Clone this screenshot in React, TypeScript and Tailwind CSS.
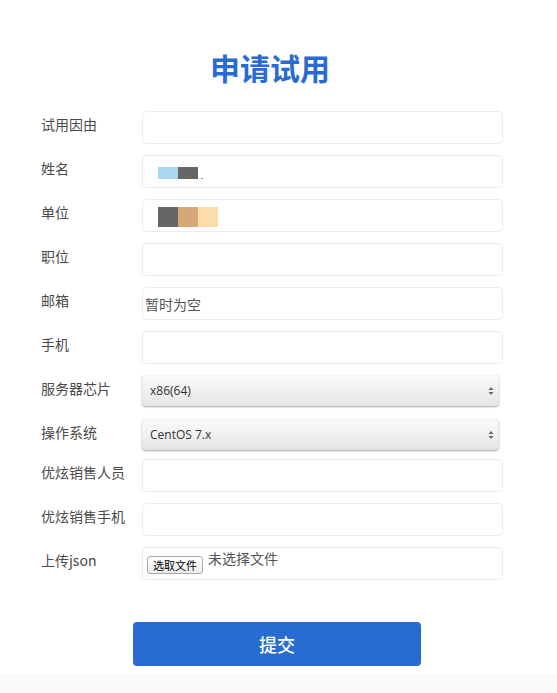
import React from 'react'

const cjk = "font-['Noto_Sans_CJK_SC','Noto_Sans',sans-serif]"

type Field = {
  label: string
  kind: 'text' | 'select' | 'file'
  value?: React.ReactNode
  gap: string
}

const NameBlocks = () => (
  <div className="flex pl-[15px] pt-[11px]">
    <span className="w-[20px] h-[12px] bg-[#a9d7f1]" />
    <span className="w-[20px] h-[12px] bg-[#666666]" />
    <span className="w-[2px] h-[1px] bg-[#888] ml-[3px] mt-[11px]" />
  </div>
)

const UnitBlocks = () => (
  <div className="flex pl-[15px] pt-[7px]">
    <span className="w-[20px] h-[20px] bg-[#666666]" />
    <span className="w-[20px] h-[20px] bg-[#d6a777]" />
    <span className="w-[20px] h-[20px] bg-[#fcddaa]" />
  </div>
)

const fields: Field[] = [
  { label: '试用因由', kind: 'text', gap: 'mt-0' },
  { label: '姓名', kind: 'text', value: <NameBlocks />, gap: 'mt-[11px]' },
  { label: '单位', kind: 'text', value: <UnitBlocks />, gap: 'mt-[11px]' },
  { label: '职位', kind: 'text', gap: 'mt-[11px]' },
  { label: '邮箱', kind: 'text', value: <span className="block pl-[2px] pt-[6px] text-[14px] text-[#555]">暂时为空</span>, gap: 'mt-[11px]' },
  { label: '手机', kind: 'text', gap: 'mt-[11px]' },
  { label: '服务器芯片', kind: 'select', value: 'x86(64)', gap: 'mt-[11px]' },
  { label: '操作系统', kind: 'select', value: 'CentOS 7.x', gap: 'mt-[13px]' },
  { label: '优炫销售人员', kind: 'text', gap: 'mt-[9px]' },
  { label: '优炫销售手机', kind: 'text', gap: 'mt-[11px]' },
  { label: '上传json', kind: 'file', gap: 'mt-[11px]' },
]

const SelectBox = ({ value }: { value: React.ReactNode }) => (
  <div className="w-[357px] h-[31px] rounded-[4px] bg-gradient-to-b from-[#fbfbfb] via-[#f0f0f0] to-[#e6e6e6] shadow-[0_1px_2px_rgba(0,0,0,0.35),inset_0_0_1px_rgba(0,0,0,0.2)] flex items-center justify-between pl-[8px] pr-[5px]">
    <span className="text-[12px] text-[#333] font-['Open_Sans','Noto_Sans',sans-serif]">{value}</span>
    <svg width="6" height="10" viewBox="0 0 6 10">
      <path d="M3 1 L5.5 4 H0.5 Z" fill="#666" />
      <path d="M3 9 L5.5 6 H0.5 Z" fill="#666" />
    </svg>
  </div>
)

const FileBox = () => (
  <div className="w-[361px] h-[33px] rounded-[5px] border border-[#ececec] bg-white flex items-start pl-[4px]">
    <button className="mt-[8px] h-[18px] px-[5px] rounded-[3px] border border-[#a8a8a8] bg-gradient-to-b from-white to-[#ededed] text-[11px] leading-[16px] text-black">
      选取文件
    </button>
    <span className="ml-[5px] mt-[1px] text-[14px] leading-[18px] text-[#555]">未选择文件</span>
  </div>
)

const App = () => {
  return (
    <div className={`min-h-[693px] bg-[#fafafa] ${cjk}`}>
      <div className="bg-white pt-[47px] pb-[8px]">
        <h1 className="text-center text-[30px] leading-[40px] font-bold text-[#2a6bd1] pr-[17px]">申请试用</h1>
        <div className="mt-[24px] pl-[41px] flex flex-col">
          {fields.map((f, i) => (
            <div key={i} className={`flex items-start ${f.gap}`}>
              <label className="w-[101px] pt-[3px] text-[14px] leading-[20px] text-[#4a4a4a]">{f.label}</label>
              {f.kind === 'text' && (
                <div className="w-[361px] h-[33px] rounded-[5px] border border-[#ececec] bg-white">{f.value}</div>
              )}
              {f.kind === 'select' && <SelectBox value={f.value} />}
              {f.kind === 'file' && <FileBox />}
            </div>
          ))}
        </div>
        <div className="mt-[42px] pl-[133px]">
          <button className="w-[288px] h-[44px] rounded-[4px] bg-[#286bd1] text-white text-[18px] font-medium">提交</button>
        </div>
      </div>
    </div>
  )
}

export default App
